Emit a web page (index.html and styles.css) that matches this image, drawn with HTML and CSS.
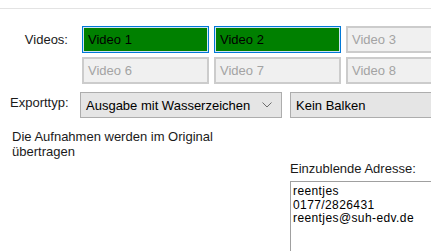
FILE: index.html
```html
<!DOCTYPE html>
<html lang="de">
<head>
<meta charset="utf-8">
<link rel="stylesheet" href="styles.css">
</head>
<body>
<div class="frame">
  <div class="topline"></div>
  <div class="videos">
    <div class="vlabel">Videos:</div>
    <div class="vgrid">
      <div class="btn on">Video 1</div>
      <div class="btn on">Video 2</div>
      <div class="btn off">Video 3</div>
      <div class="btn off">Video 6</div>
      <div class="btn off">Video 7</div>
      <div class="btn off">Video 8</div>
    </div>
  </div>
  <div class="export">
    <div class="elabel">Exporttyp:</div>
    <div class="combo c1"><span>Ausgabe mit Wasserzeichen</span>
      <svg class="chev" width="10" height="6" viewBox="0 0 10 6"><path d="M0.5 0.5 L5 5 L9.5 0.5" fill="none" stroke="#6d6d6d" stroke-width="1"/></svg>
    </div>
    <div class="combo c2"><span>Kein Balken</span></div>
  </div>
  <div class="bottom">
    <p class="note">Die Aufnahmen werden im Original übertragen</p>
    <div class="addr">
      <div class="alabel">Einzublende Adresse:</div>
      <div class="abox">
        <div class="aline">reentjes</div>
        <div class="aline">0177/2826431</div>
        <div class="aline">reentjes@suh-edv.de</div>
      </div>
    </div>
  </div>
</div>
</body>
</html>
```

FILE: styles.css
```css
html, body {
  margin: 0;
  padding: 0;
  background: #ffffff;
  overflow: hidden;
}
body {
  width: 431px;
  height: 251px;
  font-family: "Liberation Sans", Arial, sans-serif;
  font-size: 13px;
  color: #000;
}
.frame {
  width: 431px;
  height: 251px;
  overflow: hidden;
}
.topline {
  margin-top: 8px;
  height: 1px;
  background: #e3e3e3;
}
.videos {
  display: flex;
  margin-top: 17px;
}
.vlabel {
  width: 68px;
  text-align: right;
  padding-top: 6px;
  flex: none;
  margin-right: 14px;
  color: #1a1a1a;
}
.vgrid {
  display: grid;
  grid-template-columns: 127px 127px 127px;
  grid-auto-rows: 27px;
  column-gap: 5px;
  row-gap: 4px;
  flex: none;
}
.btn {
  box-sizing: border-box;
  display: flex;
  align-items: center;
  padding-left: 5px;
  white-space: nowrap;
}
.btn.on {
  background: #008000;
  border: 1px solid #0078d7;
  box-shadow: inset 0 0 0 1px #cce4f7;
  color: #000;
}
.btn.off {
  background: #f0f0f0;
  border: 2px solid #cccccc;
  color: #a3a3a3;
  padding-left: 4px;
}
.export {
  display: flex;
  align-items: flex-start;
  margin-top: 8px;
}
.elabel {
  width: 70px;
  padding-left: 10px;
  padding-top: 3px;
  flex: none;
  color: #1a1a1a;
}
.combo {
  box-sizing: border-box;
  height: 26px;
  background: #e5e5e5;
  border: 1px solid #adadad;
  display: flex;
  align-items: center;
  padding-left: 5px;
  flex: none;
  white-space: nowrap;
}
.c1 {
  width: 202px;
  justify-content: space-between;
  padding-right: 9px;
}
.c2 {
  margin-left: 8px;
  width: 160px;
}
.bottom {
  display: flex;
  align-items: flex-start;
}
.note {
  margin: 11px 0 0 12px;
  width: 215px;
  line-height: 15px;
  color: #1a1a1a;
  flex: none;
}
.addr {
  margin-left: 63px;
  margin-top: 44px;
  flex: none;
}
.alabel {
  line-height: 14px;
  margin-bottom: 5px;
  color: #1a1a1a;
}
.abox {
  box-sizing: border-box;
  width: 160px;
  height: 90px;
  border: 1px solid #a0a0a0;
  padding: 3px 2px;
  font-size: 12px;
  letter-spacing: 0.4px;
  line-height: 13.5px;
}
```
